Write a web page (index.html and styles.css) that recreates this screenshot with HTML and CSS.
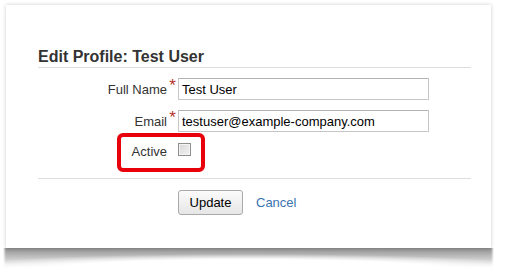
FILE: index.html
```html
<!DOCTYPE html>
<html>
<head>
    <title>Edit Profile</title>
    <link rel="stylesheet" href="styles.css">
</head>
<body>

<section class="sheet">
    <section class="card">
        <h2 class="title">Edit Profile: Test User</h2>

        <div class="row">
            <label class="lbl" for="fullname">Full Name</label>
            <span class="req">*</span>
            <input class="text" id="fullname" type="text" value="Test User" />
        </div>

        <div class="row">
            <label class="lbl" for="email">Email</label>
            <span class="req">*</span>
            <input class="text" id="email" type="text" value="testuser@example-company.com" />
        </div>

        <!-- the red box is a highlight drawn over the row -->
        <div class="row row-check">
            <label class="lbl" for="active">Active</label>
            <span class="req"></span>
            <input class="check" id="active" type="checkbox" />
            <span class="highlight"></span>
        </div>

        <div class="actions">
            <button class="btn" type="button">Update</button>
            <a class="cancel" href="#">Cancel</a>
        </div>
    </section>
    <div class="curl"></div>
</section>

</body>
</html>
```

FILE: styles.css
```css
html {
    background: white;
}

body {
    margin: 0;
    min-height: 277px;
    padding: 5px 0 0 6px;
    font-family: "Liberation Sans", Arial, Helvetica, sans-serif;
    color: #333;
}

.sheet {
    width: 485px;
}

/* the white sheet */
.card {
    position: relative;
    z-index: 1;
    height: 243px;
    box-sizing: border-box;
    padding: 42px 20px 0 32px;
    background: white;
    box-shadow: 0 0 4px rgba(0, 0, 0, 0.2);
}

/* the curled shadow under the sheet: thin in the middle, deep at the corners */
.curl {
    height: 20px;
    margin: 0 -3px;
    background:
        radial-gradient(ellipse 62% 70% at 50% 100%, white 60%, rgba(255, 255, 255, 0) 100%),
        linear-gradient(#8f8f8f, #b6b6b6 35%, #dadada 70%, rgba(255, 255, 255, 0));
    -webkit-mask: linear-gradient(90deg, transparent, black 3px, black calc(100% - 3px), transparent);
    mask: linear-gradient(90deg, transparent, black 3px, black calc(100% - 3px), transparent);
}

.title {
    margin: 0 0 10px 0;
    padding-bottom: 1px;
    font-size: 16px;
    line-height: 19px;
    font-weight: bold;
    color: #333;
    border-bottom: 1px solid #ddd;
}

.row {
    position: relative;
    display: grid;
    grid-template-columns: 129px 11px 251px;
    align-items: center;
    height: 22px;
    margin-bottom: 10px;
}

.lbl {
    text-align: right;
    font-size: 13px;
    color: #333;
}

.req {
    align-self: start;
    text-align: center;
    color: #b5322a;
    font-size: 17px;
    line-height: 14px;
    margin-top: 1px;
}

.text {
    box-sizing: border-box;
    width: 251px;
    height: 22px;
    margin: 0;
    padding: 0 3px;
    border: 1px solid #c6c6c6;
    border-top-color: #b2b2b2;
    border-radius: 1px;
    font-family: inherit;
    font-size: 13px;
    color: #000;
    background: white;
}

.row-check {
    height: 20px;
    align-items: start;
}

.row-check .lbl {
    line-height: 20px;
}

.check {
    appearance: none;
    width: 13px;
    height: 13px;
    margin: 1px 0 0 0;
    border: 1px solid #8e8f8f;
    background: linear-gradient(135deg, #d8d8d8, #f2f2f2);
    box-shadow: inset 0 0 0 1px #f4f4f4;
}

.highlight {
    position: absolute;
    left: 79px;
    top: -9px;
    width: 80px;
    height: 31px;
    border: 4px solid #e8000b;
    border-radius: 6px;
}

.actions {
    margin-top: 16px;
    padding: 11px 0 0 140px;
    border-top: 1px solid #ddd;
    display: flex;
    align-items: center;
    gap: 13px;
}

.btn {
    width: 65px;
    height: 25px;
    padding: 0;
    font-family: inherit;
    font-size: 13px;
    color: #000;
    border: 1px solid #a9a9a9;
    border-radius: 3px;
    background: linear-gradient(#fbfbfb, #e6e6e6);
}

.cancel {
    font-size: 13px;
    color: #3b73af;
    text-decoration: none;
}
```
